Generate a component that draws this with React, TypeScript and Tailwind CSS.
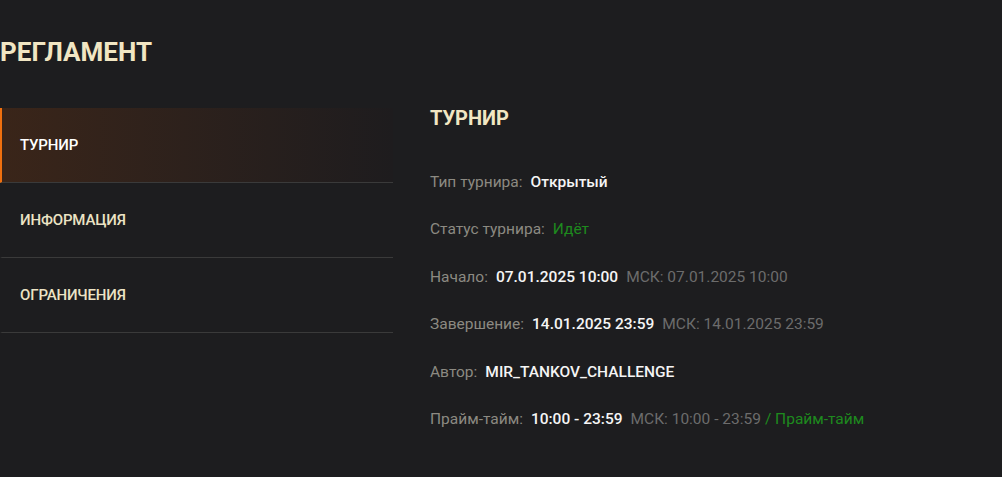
import React from "react";

type Row = {
  label: string;
  value: string;
  valueClass?: string;
  msk?: string;
  extra?: string;
};

const rows: Row[] = [
  { label: "Тип турнира:", value: "Открытый" },
  { label: "Статус турнира:", value: "Идёт", valueClass: "text-[#1e8a1e] font-normal" },
  { label: "Начало:", value: "07.01.2025 10:00", msk: "МСК: 07.01.2025 10:00" },
  { label: "Завершение:", value: "14.01.2025 23:59", msk: "МСК: 14.01.2025 23:59" },
  { label: "Автор:", value: "MIR_TANKOV_CHALLENGE" },
  { label: "Прайм-тайм:", value: "10:00 - 23:59", msk: "МСК: 10:00 - 23:59", extra: "/ Прайм-тайм" },
];

const tabs = ["ТУРНИР", "ИНФОРМАЦИЯ", "ОГРАНИЧЕНИЯ"];

const NavItem = ({ label, active }: { label: string; active: boolean }) => (
  <div
    className={`flex h-[75px] items-center border-b border-[#3a3a3a] border-l-2 pl-[18px] text-[15px] font-medium tracking-[-0.01em] ${
      active
        ? "border-l-[#f0700f] bg-gradient-to-r from-[#3a2519] to-[#1e1c1e] text-white"
        : "border-l-transparent text-[#ece3c4]"
    }`}
  >
    {label}
  </div>
);

const InfoRow = ({ row }: { row: Row }) => (
  <div className="flex items-baseline whitespace-nowrap text-[15.5px] leading-5">
    <span className="text-[#8c8a82]">{row.label}</span>
    <span className={`ml-2 font-medium ${row.valueClass ?? "text-[#f5f5f5]"}`}>{row.value}</span>
    {row.msk && <span className="ml-2 text-[#6c6c6c]">{row.msk}</span>}
    {row.extra && <span className="ml-1 text-[#1e8a1e]">{row.extra}</span>}
  </div>
);

export default function App() {
  return (
    <div
      className="h-[477px] w-full overflow-hidden bg-[#1d1d1f]"
      style={{ fontFamily: "Roboto, 'Liberation Sans', sans-serif" }}
    >
      <h1 className="pt-[36px] text-[26px] font-bold leading-8 text-[#f1e6c3]">РЕГЛАМЕНТ</h1>

      <div className="mt-[40px] flex">
        <nav className="w-[393px] shrink-0">
          {tabs.map((t, i) => (
            <NavItem key={t} label={t} active={i === 0} />
          ))}
        </nav>

        <section className="ml-[37px]">
          <h2 className="text-[20px] font-bold leading-none text-[#f1e6c3]">ТУРНИР</h2>
          <div className="mt-[43.5px] flex flex-col gap-[27.6px]">
            {rows.map((r) => (
              <InfoRow key={r.label} row={r} />
            ))}
          </div>
        </section>
      </div>
    </div>
  );
}
